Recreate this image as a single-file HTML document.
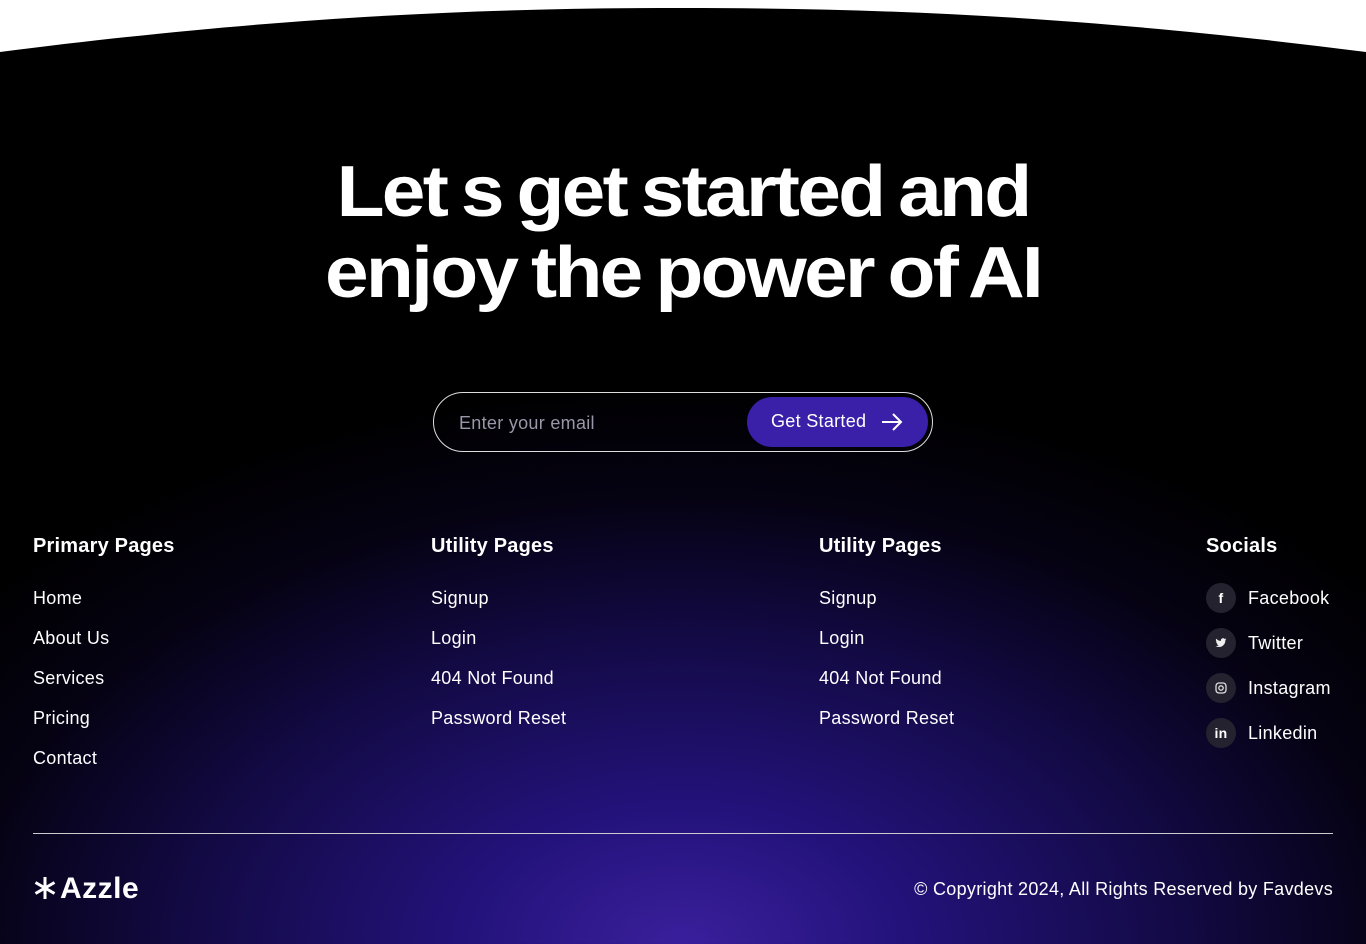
<!DOCTYPE html>
<html><head><meta charset="utf-8"><style>
*{margin:0;padding:0;box-sizing:border-box}
body{width:1366px;height:944px;overflow:hidden;font-family:"Liberation Sans",sans-serif;color:#fff;position:relative;letter-spacing:0.3px;
background:radial-gradient(ellipse 900px 560px at 683px 944px,#3a1f9c 0%,#23127a 25%,#130a45 55%,#050212 80%,#000 100%),#000;}
.top{position:absolute;left:0;top:0}
h1{position:absolute;left:0;width:1366px;top:152px;text-align:center;font-size:72px;line-height:81px;font-weight:bold;letter-spacing:-2.5px;word-spacing:-4px;transform:scaleX(1.09)}
.form{position:absolute;left:433px;top:392px;width:500px;height:60px;border:1px solid #ddd;border-radius:30px}
.form span{position:absolute;left:25px;top:20px;font-size:18px;color:#9a98a8}
.btn{position:absolute;left:313px;top:4px;width:181px;height:50px;border-radius:25px;background:#3a1fa8;font-size:18px;padding:14px 0 0 24px}
.btn svg{position:absolute;left:134px;top:16px}
.col{position:absolute;top:535px}
.col h3{font-size:20px;font-weight:bold;margin-bottom:30px;letter-spacing:0.2px}
.col a{display:block;font-size:18px;height:40px;color:#fff;text-decoration:none}
.soc div{height:45px;font-size:18px;position:relative;padding-left:42px;line-height:30px}
.soc h3{margin-bottom:25px}
.soc div i{position:absolute;left:0;top:0;width:30px;height:30px;border-radius:50%;background:#25222f;font-style:normal;font-size:14px;font-weight:bold;text-align:center;line-height:30px}
.soc div i svg{position:absolute;left:9px;top:9px}
.line{position:absolute;left:33px;top:833px;width:1300px;height:1px;background:#ccc}
.logo{position:absolute;left:33px;top:872px;font-size:30px;font-weight:bold;letter-spacing:0.5px}
.logo svg{vertical-align:-2px;margin-right:3px}
.copy{position:absolute;right:33px;top:879px;font-size:18px}
</style></head><body>
<svg class="top" width="1366" height="60"><path d="M0 0H1366V52C1100 18 900 8 683 8C466 8 266 18 0 52Z" fill="#fff"/></svg>
<h1>Let s get started and<br>enjoy the power of AI</h1>
<div class="form"><span>Enter your email</span><div class="btn">Get Started<svg width="22" height="18" viewBox="0 0 22 18"><path d="M1 9H20M12 1L20 9L12 17" stroke="#fff" stroke-width="2" fill="none"/></svg></div></div>
<div class="col" style="left:33px"><h3>Primary Pages</h3><a>Home</a><a>About Us</a><a>Services</a><a>Pricing</a><a>Contact</a></div>
<div class="col" style="left:431px"><h3>Utility Pages</h3><a>Signup</a><a>Login</a><a>404 Not Found</a><a>Password Reset</a></div>
<div class="col" style="left:819px"><h3>Utility Pages</h3><a>Signup</a><a>Login</a><a>404 Not Found</a><a>Password Reset</a></div>
<div class="col soc" style="left:1206px"><h3>Socials</h3>
<div><i>f</i>Facebook</div>
<div><i><svg width="12" height="12" viewBox="0 0 24 24"><path fill="#eee" d="M23 4.6c-.8.4-1.7.6-2.6.7.9-.6 1.600-1.4 2-2.5-.9.5-1.9.9-2.9 1.1A4.5 4.5 0 0 0 11.8 8 12.8 12.8 0 0 1 2.5 3.3a4.5 4.5 0 0 0 1.4 6c-.7 0-1.4-.2-2-.6 0 2.2 1.6 4 3.6 4.4-.7.2-1.4.2-2 .1.6 1.8 2.2 3.1 4.2 3.1A9 9 0 0 1 1 18.2 12.8 12.8 0 0 0 7.9 20c8.3 0 12.8-6.9 12.8-12.8v-.6c.9-.6 1.7-1.4 2.3-2.3z"/></svg></i>Twitter</div>
<div><i><svg width="12" height="12" viewBox="0 0 12 12"><rect x="1" y="1" width="10" height="10" rx="3" stroke="#ddd" fill="none" stroke-width="1.3"/><circle cx="6" cy="6" r="2.2" stroke="#ddd" fill="none" stroke-width="1.3"/></svg></i>Instagram</div>
<div><i>in</i>Linkedin</div></div>
<div class="line"></div>
<div class="logo"><svg width="24" height="24" viewBox="0 0 24 24"><path d="M12 1V23M2.5 6.5L21.5 17.5M2.5 17.5L21.5 6.5" stroke="#fff" stroke-width="3" /></svg>Azzle</div>
<div class="copy">© Copyright 2024, All Rights Reserved by Favdevs</div>
</body></html>
